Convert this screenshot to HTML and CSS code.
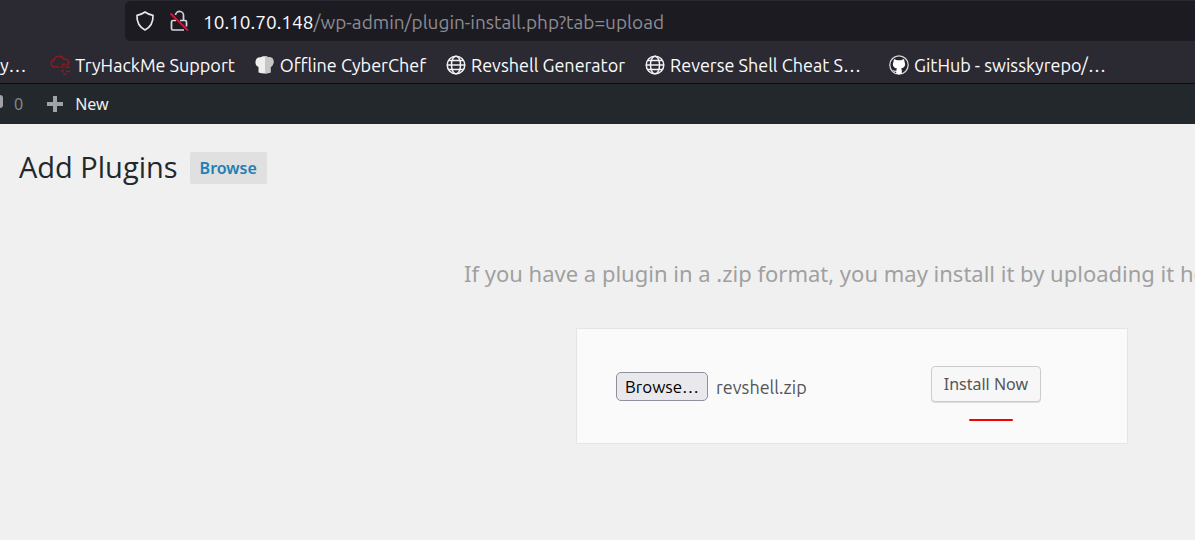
FILE: index.html
```html
<!DOCTYPE html>
<html lang="en">
<head>
<meta charset="utf-8">
<title>Add Plugins</title>
<link rel="stylesheet" href="styles.css">
</head>
<body>
<header class="chrome">
  <div class="toolbar">
    <div class="urlbar">
      <svg class="url-icon" viewBox="0 0 20 22" aria-hidden="true"><path d="M10 2c2.600 1.900 5.200 2.900 8 3.300.3 6.500-2.400 11.800-8 14.700C4.400 17.100 1.700 11.800 2 5.300 4.800 4.900 7.400 3.900 10 2z" fill="none" stroke="#e6e6ea" stroke-width="1.700" stroke-linejoin="round"/></svg>
      <svg class="url-icon lock" viewBox="0 0 20 22" aria-hidden="true"><g fill="none" stroke="#d6d6da" stroke-width="1.700"><path d="M6.500 5a4 4 0 0 1 8 1V10.500"/><path d="M11 10.500h5a1.500 1.500 0 0 1 1.500 1.500v4.500M15 20H4a1.500 1.500 0 0 1-1.500-1.500V12A1.500 1.500 0 0 1 4 10.500h3"/></g><path d="M1.500 3.500l17.500 17" stroke="#d8143c" stroke-width="1.800"/></svg>
      <span class="url"><span class="host">10.10.70.148</span>/wp-admin/plugin-install.php?tab=upload</span>
    </div>
  </div>
  <nav class="bookmarks" aria-label="Bookmarks">
    <a class="bookmark partial" href="#">y…</a>
    <a class="bookmark" href="#">
      <svg class="favicon" viewBox="0 0 20 20" aria-hidden="true"><g fill="none" stroke="#8f1a1f" stroke-width="1.500"><path d="M9 12H4.200a3.400 3.400 0 0 1-.4-6.700A5.500 5.500 0 0 1 14 4.200a3.800 3.800 0 0 1 4.500 5"/><path d="M12 9.500h3M16.500 9.500h2M10.500 12h3M15 12h4.500M11 16h3M16 16.500h4M13 19h3"/></g></svg>
      <span>TryHackMe Support</span></a>
    <a class="bookmark" href="#">
      <svg class="favicon" viewBox="0 0 20 20" aria-hidden="true"><path d="M3.500 17.500V12C.8 11 .3 9 .5 6.500.8 3.500 3 2 5.500 2.300 7 .8 12 .8 13.500 2.300c3-.3 5 1.200 5 4.200 0 2.500-.8 4.500-3 5.500v5.500c-4 1.200-8 1.200-12 0z" fill="#efefef"/><path d="M10 1.200c1.500.1 2.800.4 3.500 1.100 3-.3 5 1.200 5 4.200 0 2.500-.8 4.500-3 5.500v5.500c-2 .6-3.500.9-5.500.9z" fill="#c6c6c6"/></svg>
      <span>Offline CyberChef</span></a>
    <a class="bookmark" href="#">
      <svg class="favicon" viewBox="0 0 20 20" aria-hidden="true"><g fill="none" stroke="#f2f2f5" stroke-width="1.500"><circle cx="10" cy="10" r="8.800"/><ellipse cx="10" cy="10" rx="4.500" ry="8.800"/><path d="M1.500 10h17M3 5.500h14M3 14.500h14"/></g></svg>
      <span>Revshell Generator</span></a>
    <a class="bookmark truncated" href="#">
      <svg class="favicon" viewBox="0 0 20 20" aria-hidden="true"><g fill="none" stroke="#f2f2f5" stroke-width="1.500"><circle cx="10" cy="10" r="8.800"/><ellipse cx="10" cy="10" rx="4.500" ry="8.800"/><path d="M1.500 10h17M3 5.500h14M3 14.500h14"/></g></svg>
      <span>Reverse Shell Cheat S…</span></a>
    <a class="bookmark truncated" href="#">
      <svg class="favicon" viewBox="0 0 20 20" aria-hidden="true"><circle cx="10" cy="10" r="9.200" fill="#24242a" stroke="#d5d5d8" stroke-width="1.300"/><path d="M5 4l3 1.300h4L15 4l.6 3c1.400 3.400-.2 6-3.600 6.500.6.700.8 1.300.8 2v3.300c-1.800.6-3.800.6-5.600 0v-2c-2 .3-2.500-.8-3.200-1.800 1.200 0 1.500 1 3.300.7.100-1 .3-1.700.7-2.200C4.600 13 3 10.400 4.400 7z" fill="#fff"/></svg>
      <span>GitHub - swisskyrepo/…</span></a>
  </nav>
</header>
<nav class="adminbar" aria-label="Admin">
  <a class="admin-item comments" href="#"><svg class="bubble" viewBox="0 0 20 20" aria-hidden="true"><path d="M3 1h14q3 0 3 3v7q0 3-3 3h-6l-5 5v-5H3q-3 0-3-3V4q0-3 3-3z" fill="#9ea3a8"/></svg><span>0</span></a>
  <a class="admin-item" href="#"><svg class="plus" viewBox="0 0 18 18" aria-hidden="true"><path d="M7 1h4v6h6v4h-6v6H7v-6H1V7h6z" fill="#9ea3a8"/></svg><span>New</span></a>
</nav>
<main class="page">
  <div class="heading">
    <h1 class="title">Add Plugins</h1>
    <a class="browse-link" href="#">Browse</a>
  </div>
  <p class="help">If you have a plugin in a .zip format, you may install it by uploading it here.</p>
  <form class="upload-form">
    <div class="picker">
      <input class="file-input" type="file" id="pluginzip">
      <label class="file-button" for="pluginzip">Browse…</label>
      <span class="file-name">revshell.zip</span>
    </div>
    <div class="submit">
      <button class="install" type="button">Install Now</button>
      <span class="underline"></span>
    </div>
  </form>
</main>
</body>
</html>
```
FILE: styles.css
```css
* { box-sizing: border-box; }
body {
  margin: 0;
  min-height: 100vh;
  overflow: hidden;
  background: #f0f0f0;
  color: #444;
  font-family: "Noto Sans", "Open Sans", sans-serif;
}
a { color: inherit; text-decoration: none; }
.chrome {
  background: #2b2a33;
  color: #fbfbfe;
  border-bottom: 1px solid #0d0d11;
  font-family: Ubuntu, "Noto Sans", sans-serif;
  font-size: 18px;
}
.toolbar { padding: 1px 0 0 125px; }
.urlbar {
  display: flex;
  align-items: center;
  height: 40px;
  padding-left: 10px;
  background: #1c1b22;
  border-radius: 5px 0 0 5px;
  white-space: nowrap;
}
.url-icon { width: 20px; height: 22px; }
.lock { margin: 0 14px; }
.url { color: #8c8b92; font-size: 19px; line-height: 24px; padding-top: 2px; }
.host { color: #fbfbfe; }
.bookmarks {
  display: flex;
  align-items: center;
  gap: 20px;
  height: 42px;
  padding-top: 6px;
  white-space: nowrap;
}
.bookmark { display: flex; align-items: center; gap: 5px; line-height: 24px; }
.partial { padding-right: 4px; }
.truncated { min-width: 224px; }
.favicon { width: 20px; height: 20px; flex: none; }
.adminbar {
  display: flex;
  align-items: center;
  gap: 23px;
  height: 40px;
  background: #23282d;
  color: #eee;
  font-size: 16px;
}
.admin-item { display: flex; align-items: center; gap: 11px; }
.comments { color: #82878c; margin-left: -17px; }
.bubble { width: 20px; height: 20px; }
.plus { width: 18px; height: 18px; }
.page { padding: 22px 0 0 19px; }
.heading { display: flex; align-items: center; gap: 12px; }
.title { margin: 0; color: #23282d; font-family: "Open Sans", sans-serif; font-size: 29px; font-weight: 400; line-height: 42px; }
.browse-link {
  margin-top: 2px;
  padding: 4px 10px;
  border-radius: 2px;
  background: #e0e0e0;
  color: #1f7fb3;
  font-size: 16px;
  font-weight: 600;
  line-height: 24px;
}
.help {
  margin: 68px 0 38px 445px;
  color: #a0a0a0;
  font-size: 22px;
  line-height: 34px;
  white-space: nowrap;
}
.upload-form {
  display: flex;
  align-items: flex-start;
  justify-content: space-between;
  width: 552px;
  margin-left: 557px;
  padding: 37px 86px 22px 39px;
  border: 1px solid #e5e5e5;
  background: #fafafa;
}
.picker { display: flex; align-items: center; gap: 8px; padding-top: 6px; font-family: Ubuntu, "Noto Sans", sans-serif; font-size: 18px; }
.file-input { position: absolute; width: 1px; height: 1px; opacity: 0; }
.file-button {
  padding: 0 8px;
  border: 1px solid #8f8f9d;
  border-radius: 5px;
  background: #e9e9ed;
  color: #000;
  font-size: 17px;
  line-height: 27px;
}
.file-name { color: #555; }
.submit { display: flex; flex-direction: column; align-items: center; gap: 17px; padding-left: 10px; }
.install {
  height: 36px;
  padding: 0 12px;
  border: 1px solid #ccc;
  border-radius: 4px;
  background: #f7f7f7;
  box-shadow: 0 1px 0 #ddd;
  color: #555;
  font-family: inherit;
  font-size: 16px;
}
.underline { width: 44px; height: 2px; background: #f40000; border-radius: 1px; margin-left: 10px; }
```
